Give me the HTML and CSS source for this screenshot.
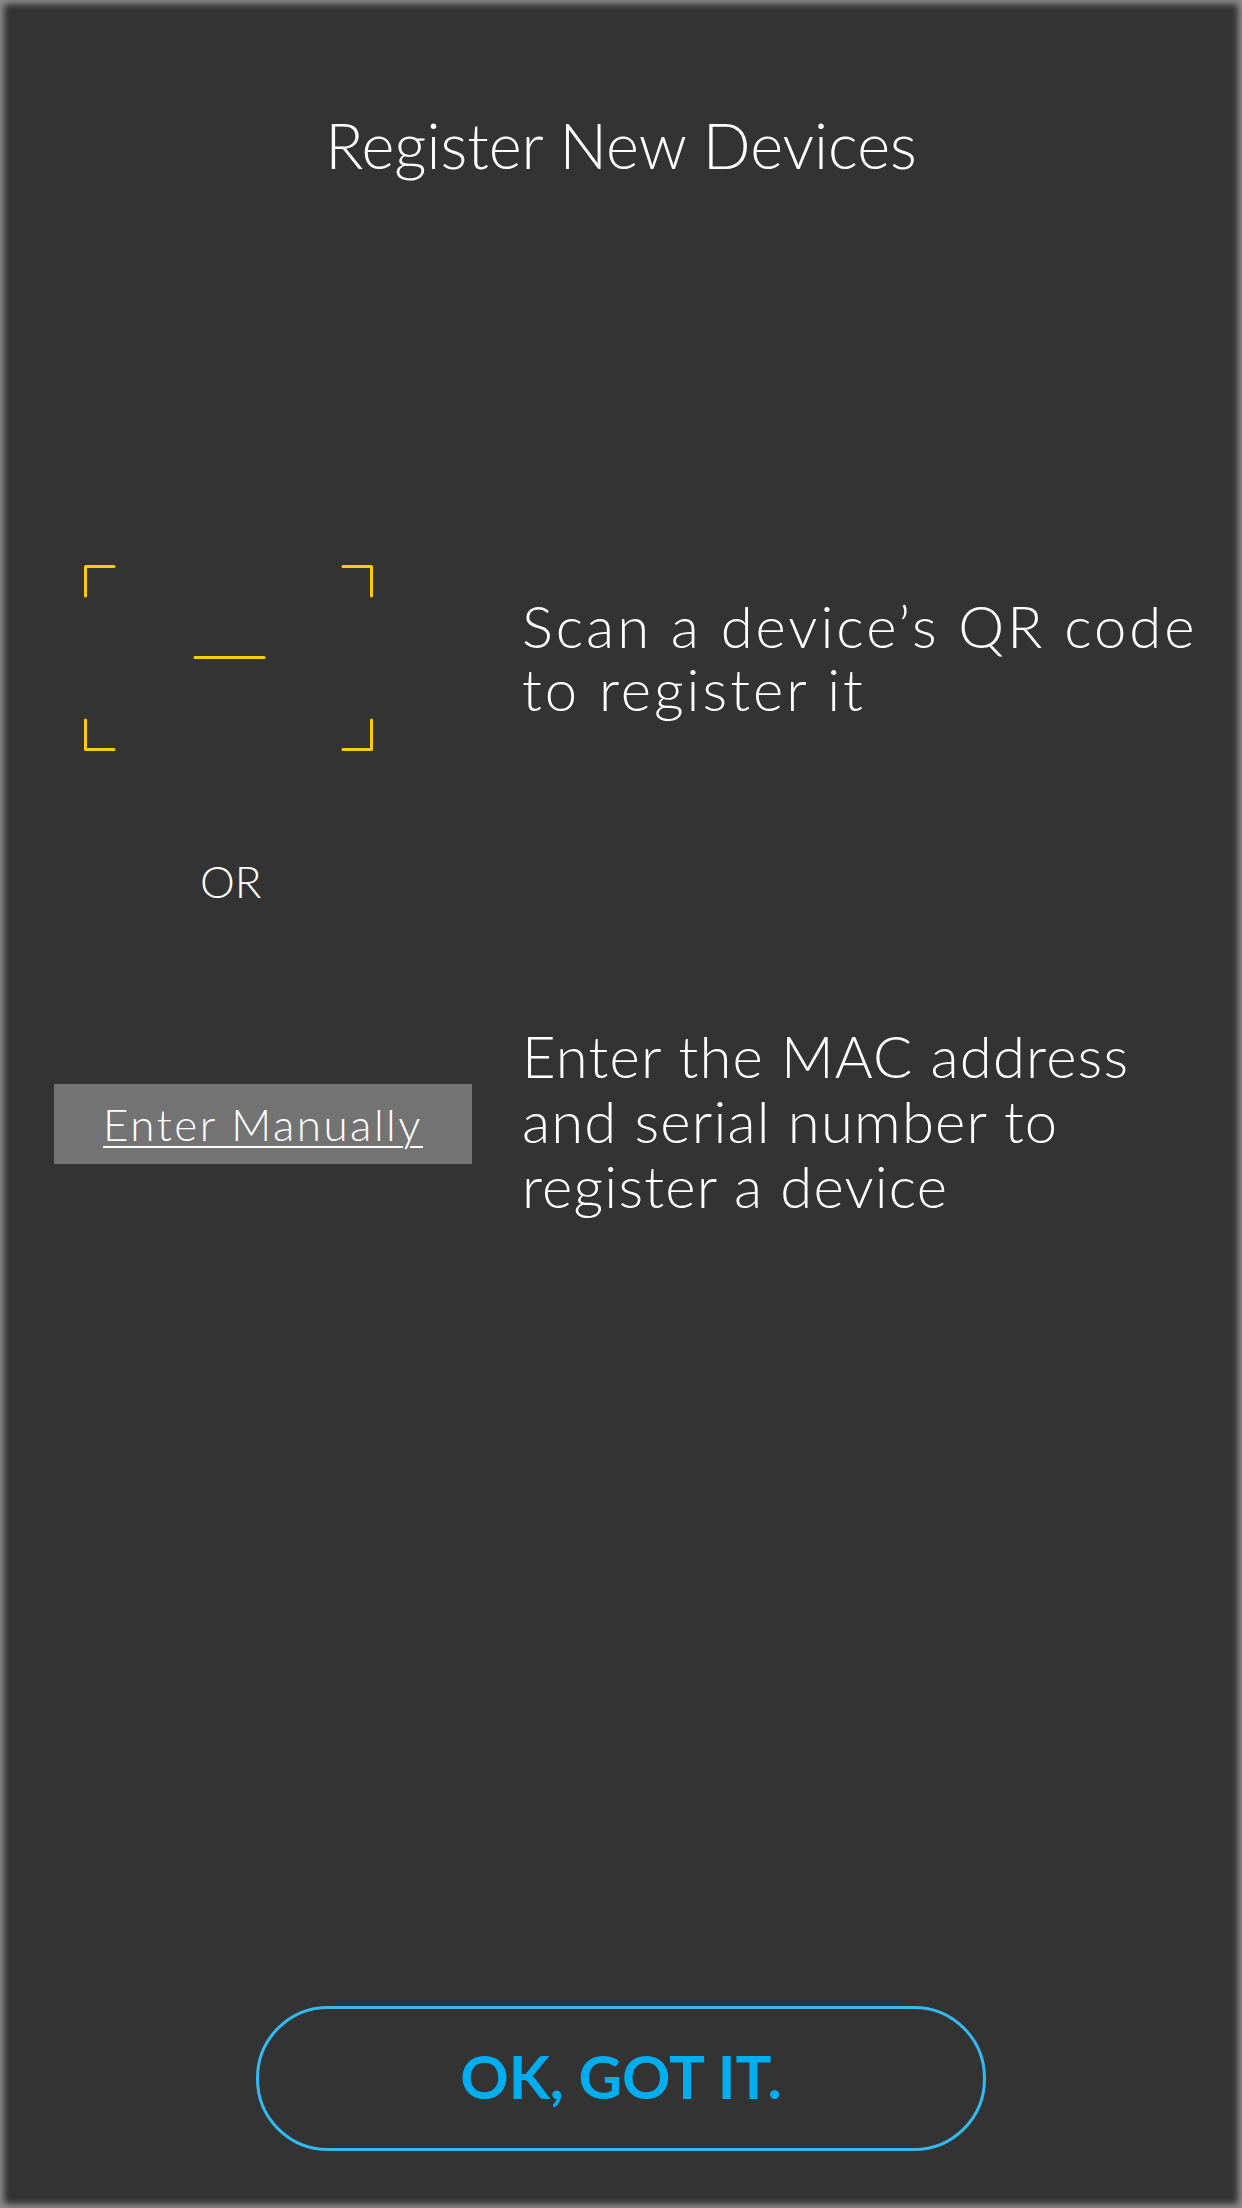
FILE: index.html
```html
<!DOCTYPE html>
<html lang="en">
<head>
<meta charset="utf-8">
<title>Register New Devices</title>
<link rel="stylesheet" href="styles.css">
</head>
<body>
<main class="screen">
  <h1 class="title">Register New Devices</h1>

  <section class="row row-scan">
    <div class="left">
      <svg class="scanner" width="289" height="186" viewBox="0 0 289 186" aria-hidden="true">
        <g fill="none" stroke="#ffcc00" stroke-width="3" stroke-linecap="round" stroke-linejoin="round">
          <path d="M1.5 31 V1.5 H30"/>
          <path d="M259 1.5 H287.5 V31"/>
          <path d="M1.5 155 V184.5 H30"/>
          <path d="M259 184.5 H287.5 V155"/>
          <path d="M111 92.5 H180"/>
        </g>
      </svg>
    </div>
    <p class="desc desc-scan">Scan a device’s QR code<br>to register it</p>
  </section>

  <div class="or">OR</div>

  <section class="row row-manual">
    <div class="left">
      <a class="manual-btn" href="#">Enter Manually</a>
    </div>
    <p class="desc desc-manual">Enter the MAC address<br>and serial number to<br>register a device</p>
  </section>

  <button class="ok-btn" type="button">OK, GOT IT.</button>
</main>
</body>
</html>
```

FILE: styles.css
```css
html, body {
  margin: 0;
  padding: 0;
  background: #333333;
}

.screen {
  width: 1242px;
  height: 2208px;
  box-sizing: border-box;
  background: #333333;
  display: flex;
  flex-direction: column;
  font-family: "Lato", "Liberation Sans", sans-serif;
  font-weight: 300;
  color: #ffffff;
  box-shadow: inset 0 0 6px 4px #8c8c8c;
}

.title {
  margin: 113px 0 0;
  font-size: 63px;
  line-height: 64px;
  font-weight: 300;
  text-align: center;
  letter-spacing: 0;
}

.row {
  display: flex;
  align-items: flex-start;
}

.left {
  width: 522px;
  flex: none;
}

.row-scan {
  margin-top: 388px;
}

.scanner {
  display: block;
  margin-left: 84px;
}

.desc {
  margin: 0;
  font-size: 58px;
}

.desc-scan {
  line-height: 63px;
  margin-top: 29px;
  letter-spacing: 3px;
}

.or {
  margin: 108px 0 0 200px;
  font-size: 44px;
  line-height: 44px;
}

.row-manual {
  margin-top: 120px;
}

.manual-btn {
  display: flex;
  align-items: center;
  justify-content: center;
  margin: 61px 0 0 54px;
  width: 418px;
  height: 80px;
  background: #737373;
  color: #ffffff;
  font-size: 44px;
  letter-spacing: 2.5px;
  text-decoration: underline;
  text-decoration-thickness: 2px;
  text-underline-offset: 5px;
}

.desc-manual {
  line-height: 65px;
  letter-spacing: 1.2px;
}

.ok-btn {
  margin: auto auto 57px;
  width: 730px;
  height: 145px;
  box-sizing: border-box;
  border: 3px solid #33baf0;
  border-radius: 72px;
  background: transparent;
  color: #00aeef;
  font-family: "Lato", "Liberation Sans", sans-serif;
  font-weight: 700;
  font-size: 60px;
  line-height: 1;
  padding: 0 0 6px;
}
```
